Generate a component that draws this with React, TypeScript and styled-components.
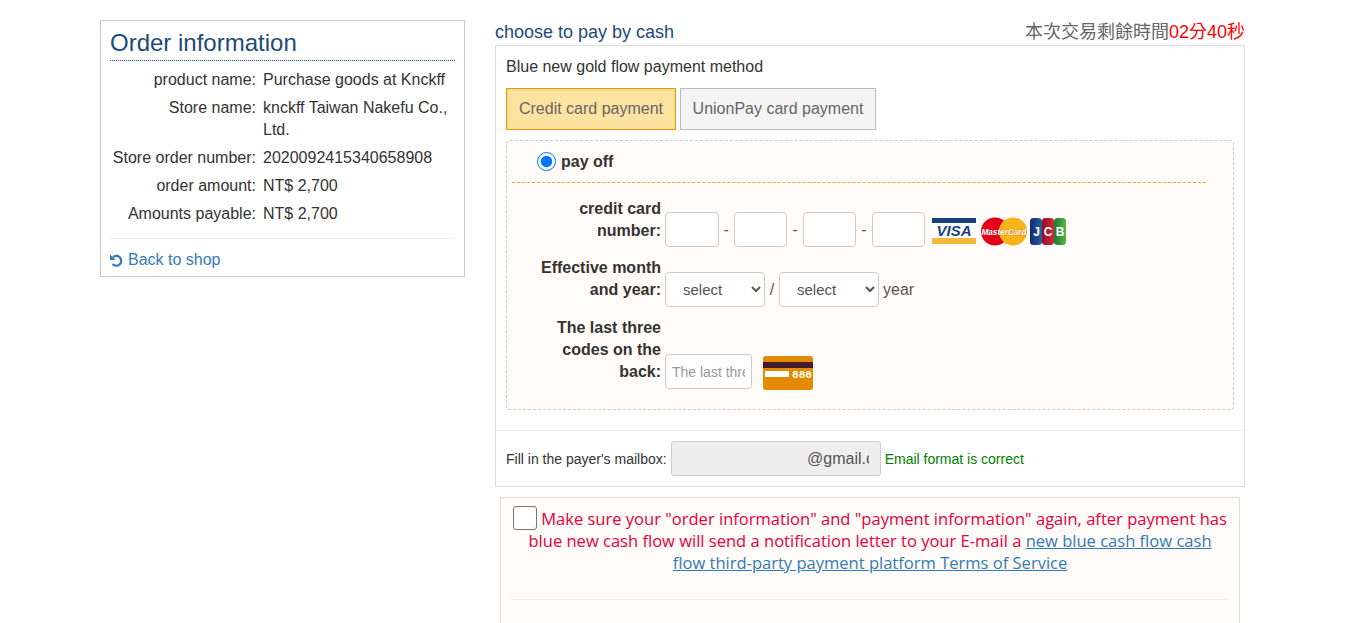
import React from "react";
import styled, { createGlobalStyle } from "styled-components";

const GlobalStyle = createGlobalStyle`
  html, body {
    margin: 0;
    overflow: hidden;
    background: #fff;
    color: #333;
    font-family: "Liberation Sans", Arial, sans-serif;
    font-size: 16px;
    line-height: 22px;
  }
  * { box-sizing: border-box; }
`;

const Page = styled.div`
  display: flex;
  align-items: flex-start;
  gap: 30px;
  width: 1145px;
  margin-left: 100px;
  padding-top: 20px;
`;

const OrderPanel = styled.aside`
  width: 365px;
  flex: none;
  border: 1px solid #ccc;
  padding: 8px 9px 9px;
  height: 257px;
`;

const OrderTitle = styled.h2`
  margin: 0 0 5px;
  font-size: 24px;
  font-weight: 400;
  line-height: 27px;
  height: 32px;
  color: #1e4a7a;
  border-bottom: 1px dotted #0b5394;
`;

const InfoRow = styled.div`
  display: grid;
  grid-template-columns: 146px 1fr;
  column-gap: 7px;
  padding: 3px 0;
`;

const InfoLabel = styled.div`
  text-align: right;
`;

const Divider = styled.hr`
  border: 0;
  border-top: 1px solid #eee;
  margin: 10px 0 10px;
`;

const BackLink = styled.a`
  display: flex;
  align-items: center;
  gap: 5px;
  color: #337ab7;
  text-decoration: none;
`;

const PayColumn = styled.main`
  width: 750px;
  flex: none;
`;

const PayHeader = styled.div`
  display: flex;
  justify-content: space-between;
  align-items: flex-start;
  height: 25px;
`;

const PayTitle = styled.h3`
  margin: 0;
  font-size: 18px;
  font-weight: 400;
  line-height: 24px;
  color: #1e4a7a;
`;

const Timer = styled.div`
  font-family: "Liberation Sans", "Noto Sans CJK TC", sans-serif;
  font-size: 18px;
  line-height: 24px;
  color: #666;
`;

const TimerValue = styled.span`
  color: #ff0000;
`;

const PayBox = styled.section`
  border: 1px solid #ddd;
`;

const MethodArea = styled.div`
  padding: 10px 10px 20px;
`;

const Tabs = styled.div`
  display: flex;
  gap: 4px;
  margin: 10px 0;
`;

const Tab = styled.button<{ $active?: boolean }>`
  height: 42px;
  width: ${(p) => (p.$active ? "170px" : "196px")};
  padding: 0;
  font: inherit;
  color: #666;
  border: 1px solid ${(p) => (p.$active ? "#e39a14" : "#bbb")};
  background: ${(p) => (p.$active ? "#fde3a0" : "#f4f4f4")};
  box-shadow: ${(p) => (p.$active ? "inset 0 0 3px rgba(227, 154, 20, 0.35)" : "none")};
`;

const CardPanel = styled.div`
  height: 270px;
  border: 1px dashed #ccc;
  border-radius: 4px;
  background: #fffbf8;
  padding: 0 27px 0 5px;
`;

const RadioRow = styled.label`
  display: flex;
  align-items: center;
  gap: 5px;
  height: 42px;
  padding-left: 25px;
  font-weight: 700;
  border-bottom: 1px dashed #f5a623;
`;

const Radio = styled.input`
  width: 19px;
  height: 19px;
  margin: 0;
  accent-color: #0075ff;
`;

const FormRow = styled.div<{ $top: number }>`
  display: flex;
  align-items: flex-end;
  margin-top: ${(p) => p.$top}px;
`;

const FieldLabel = styled.div<{ $bottom: number }>`
  width: 140px;
  flex: none;
  margin: 0 4px ${(p) => p.$bottom}px 9px;
  text-align: right;
  font-weight: 700;
`;

const TextInput = styled.input<{ $width: number }>`
  width: ${(p) => p.$width}px;
  height: 35px;
  padding: 0 6px;
  border: 1px solid #ccc;
  border-radius: 4px;
  background: #fff;
  font: inherit;
  font-size: 14px;
  color: #555;
  &::placeholder {
    color: #999;
  }
`;

const Dash = styled.span`
  width: 15.4px;
  text-align: center;
  color: #555;
  line-height: 35px;
`;

const CardLogos = styled.div`
  display: flex;
  align-items: center;
  gap: 3px;
  height: 35px;
  margin-left: 7px;
  padding-top: 3px;
`;

const MonthSelect = styled.select`
  width: 100px;
  height: 35px;
  padding: 0 13px;
  border: 1px solid #ccc;
  border-radius: 4px;
  background: #fff;
  font: inherit;
  font-size: 15px;
  color: #555;
`;

const Slash = styled.span`
  width: 14px;
  text-align: center;
  line-height: 35px;
  color: #555;
`;

const YearWord = styled.span`
  margin-left: 4px;
  line-height: 35px;
  color: #555;
`;

const BackCard = styled.svg`
  margin: 0 0 -1px 11px;
  flex: none;
`;

const MailRow = styled.div`
  display: flex;
  align-items: center;
  height: 56px;
  padding: 0 10px;
  border-top: 1px solid #eee;
  font-size: 14px;
`;

const MailInput = styled.input`
  width: 210px;
  height: 35px;
  margin: 0 4px;
  padding: 0 11px;
  border: 1px solid #ccc;
  border-radius: 3px;
  background: #eee;
  font: inherit;
  font-size: 16px;
  color: #555;
`;

const MailOk = styled.span`
  color: #008000;
`;

const Notice = styled.section`
  width: 740px;
  height: 200px;
  margin: 10px 0 0 5px;
  padding: 8px 10px 0;
  border: 1px solid #ddd;
  background: #fffbf8;
`;

const NoticeText = styled.div`
  font-family: "Open Sans", "Noto Sans", sans-serif;
  font-size: 16.55px;
  line-height: 22px;
  color: #e6003c;
  text-align: center;
`;

const NoticeCheck = styled.input`
  appearance: none;
  width: 24px;
  height: 24px;
  margin: 0 4px 0 0;
  vertical-align: -5px;
  background: #fff;
  border: 1px solid #767676;
  border-radius: 3px;
`;

const TermsLink = styled.a`
  color: #337ab7;
  text-decoration: underline;
`;

const NoticeRule = styled.hr`
  border: 0;
  border-top: 1px solid #eee;
  margin: 25px 1px 0 0;
`;

const infoRows: [string, string][] = [
  ["product name:", "Purchase goods at Knckff"],
  ["Store name:", "knckff Taiwan Nakefu Co., Ltd."],
  ["Store order number:", "2020092415340658908"],
  ["order amount:", "NT$ 2,700"],
  ["Amounts payable:", "NT$ 2,700"],
];

const VisaLogo = () => (
  <svg width="44" height="26" viewBox="0 0 44 26">
    <rect width="44" height="26" fill="#fff" />
    <rect width="44" height="5" fill="#1a3f7f" />
    <rect y="20" width="44" height="6" fill="#f6b73c" />
    <text x="22" y="18" textAnchor="middle" fontFamily="Liberation Sans" fontSize="15" fontWeight="700" fontStyle="italic" fill="#1a3f7f">
      VISA
    </text>
  </svg>
);

const MasterLogo = () => (
  <svg width="48" height="29" viewBox="-2 0 48 29">
    <circle cx="14" cy="14.5" r="14" fill="#e2001a" />
    <circle cx="32" cy="14.5" r="14" fill="#f8b419" />
    <text x="23" y="17.5" textAnchor="middle" fontFamily="Liberation Sans" fontSize="8.2" fontWeight="700" fontStyle="italic" fill="#fff" stroke="#6b2a2a" strokeWidth="0.3" paintOrder="stroke">
      MasterCard
    </text>
  </svg>
);

const JcbLogo = () => (
  <svg width="36" height="27" viewBox="0 0 36 27">
    <defs>
      <linearGradient id="jcbBlue" x1="0" y1="0" x2="1" y2="0">
        <stop offset="0" stopColor="#0d2a6b" />
        <stop offset="1" stopColor="#2c5fa8" />
      </linearGradient>
      <linearGradient id="jcbRed" x1="0" y1="0" x2="1" y2="0">
        <stop offset="0" stopColor="#8e0f25" />
        <stop offset="1" stopColor="#d8283a" />
      </linearGradient>
      <linearGradient id="jcbGreen" x1="0" y1="0" x2="1" y2="0">
        <stop offset="0" stopColor="#1a7a32" />
        <stop offset="1" stopColor="#58b548" />
      </linearGradient>
    </defs>
    <rect width="12" height="27" rx="3.5" fill="url(#jcbBlue)" />
    <rect x="12" width="12" height="27" rx="3.5" fill="url(#jcbRed)" />
    <rect x="24" width="12" height="27" rx="3.5" fill="url(#jcbGreen)" />
    <g fontFamily="Liberation Sans" fontSize="12" fontWeight="700" fill="#fff" textAnchor="middle">
      <text x="6.5" y="18">J</text>
      <text x="18" y="18">C</text>
      <text x="30" y="18">B</text>
    </g>
  </svg>
);

const BackCardIcon = () => (
  <BackCard width="50" height="34" viewBox="0 0 50 34">
    <rect width="50" height="34" rx="3" fill="#e28b00" />
    <rect y="6" width="50" height="6" fill="#451b2e" />
    <rect x="2" y="15" width="24" height="6" fill="#fff" />
    <text x="29" y="22" fontFamily="Liberation Mono" fontSize="10" fontWeight="700" fill="#fff" textLength="20" lengthAdjust="spacingAndGlyphs">
      888
    </text>
  </BackCard>
);

const UndoIcon = () => (
  <svg width="13" height="13" viewBox="0 0 13 13" fill="none" stroke="#337ab7" strokeWidth="2.2">
    <path d="M3 3.2 A4.9 4.9 0 1 1 2.6 10.1" />
    <path d="M0 0.6 L5.4 6 L0 6 Z" fill="#337ab7" stroke="none" />
  </svg>
);

export default function App() {
  return (
    <>
      <GlobalStyle />
      <Page>
        <OrderPanel>
          <OrderTitle>Order information</OrderTitle>
          {infoRows.map(([label, value]) => (
            <InfoRow key={label}>
              <InfoLabel>{label}</InfoLabel>
              <div>{value}</div>
            </InfoRow>
          ))}
          <Divider />
          <BackLink href="#">
            <UndoIcon />
            Back to shop
          </BackLink>
        </OrderPanel>

        <PayColumn>
          <PayHeader>
            <PayTitle>choose to pay by cash</PayTitle>
            <Timer>
              本次交易剩餘時間<TimerValue>02分40秒</TimerValue>
            </Timer>
          </PayHeader>
          <PayBox>
            <MethodArea>
              <div>Blue new gold flow payment method</div>
              <Tabs>
                <Tab $active>Credit card payment</Tab>
                <Tab>UnionPay card payment</Tab>
              </Tabs>
              <CardPanel>
                <RadioRow>
                  <Radio type="radio" name="pay" defaultChecked />
                  pay off
                </RadioRow>
                <FormRow $top={15}>
                  <FieldLabel $bottom={5}>credit card number:</FieldLabel>
                  <TextInput $width={53.5} />
                  <Dash>-</Dash>
                  <TextInput $width={53.5} />
                  <Dash>-</Dash>
                  <TextInput $width={53.5} />
                  <Dash>-</Dash>
                  <TextInput $width={53.5} />
                  <CardLogos>
                    <VisaLogo />
                    <MasterLogo />
                    <JcbLogo />
                  </CardLogos>
                </FormRow>
                <FormRow $top={10}>
                  <FieldLabel $bottom={6}>Effective month and year:</FieldLabel>
                  <MonthSelect>
                    <option>select</option>
                  </MonthSelect>
                  <Slash>/</Slash>
                  <MonthSelect>
                    <option>select</option>
                  </MonthSelect>
                  <YearWord>year</YearWord>
                </FormRow>
                <FormRow $top={10}>
                  <FieldLabel $bottom={6}>The last three codes on the back:</FieldLabel>
                  <TextInput $width={87} placeholder="The last three" />
                  <BackCardIcon />
                </FormRow>
              </CardPanel>
            </MethodArea>
            <MailRow>
              Fill in the payer's mailbox:
              <MailInput readOnly value={"\u00a0".repeat(28) + "@gmail.com"} />
              <MailOk>Email format is correct</MailOk>
            </MailRow>
          </PayBox>
          <Notice>
            <NoticeText>
              <NoticeCheck type="checkbox" />
              Make sure your "order information" and "payment information" again, after payment has blue new cash flow
              will send a notification letter to your E-mail a{" "}
              <TermsLink href="#">new blue cash flow cash flow third-party payment platform Terms of Service</TermsLink>
            </NoticeText>
            <NoticeRule />
          </Notice>
        </PayColumn>
      </Page>
    </>
  );
}
